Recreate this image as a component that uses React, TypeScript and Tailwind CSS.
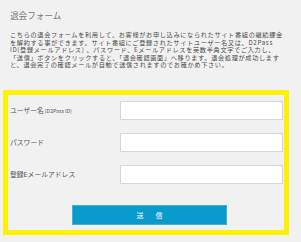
const font = { fontFamily: '"Noto Sans CJK JP", "Noto Sans", sans-serif' };

const rows = [
  { label: 'ユーザー名', note: '(D2Pass ID)' },
  { label: 'パスワード' },
  { label: '登録Eメールアドレス' },
];

const intro = [
  'こちらの退会フォームを利用して、お客様がお申し込みになられたサイト番組の継続課金',
  'を解約する事ができます。サイト番組にご登録されたサイトユーザー名又は、D2Pass',
  'ID(登録メールアドレス) 、パスワード、Eメールアドレスを英数半角文字でご入力し、',
  '「送信」ボタンをクリックすると、「退会確認画面」へ移ります。退会処理が成功します',
  'と、退会完了の確認メールが自動で送信されますのでお確かめ下さい。',
];

export default function App() {
  return (
    <div
      className="w-[301px] h-[242px] overflow-hidden bg-[#f1f1f1] text-[#555]"
      style={font}
    >
      <h1 className="mt-[10px] ml-[10px] text-[8.6px] leading-[10px] text-[#777]">
        退会フォーム
      </h1>
      <div className="mt-[11px] ml-[10px] text-[6.2px] leading-[7.5px] tracking-[0.65px] text-[#4a4a4a] whitespace-nowrap">
        {intro.map((line) => (
          <p key={line} className="h-[7.5px]">
            {line}
          </p>
        ))}
      </div>

      <form className="mt-[21px] ml-[3px] w-[286px] border-[5px] border-[#fff200] pt-[6px] pb-[5px] pl-[2px] pr-[1px]">
        <div className="flex flex-col gap-[13px]">
          {rows.map((r) => (
            <div key={r.label} className="flex items-center">
              <label className="w-[110px] text-[6.8px] leading-[10px] text-[#555] whitespace-nowrap">
                {r.label}
                {r.note && <span className="ml-[1px] text-[5.2px]">{r.note}</span>}
              </label>
              <input
                type="text"
                className="w-[163px] h-[19px] bg-white border border-[#d6d6d6] outline-none"
              />
            </div>
          ))}
        </div>
        <button
          type="button"
          className="mt-[21px] ml-[62px] w-[155px] h-[20px] bg-[#0a9bcd] border border-[#3fb1d8] text-white text-[7px] leading-[18px] tracking-[12px] pl-[12px]"
        >
          送信
        </button>
      </form>
    </div>
  );
}
